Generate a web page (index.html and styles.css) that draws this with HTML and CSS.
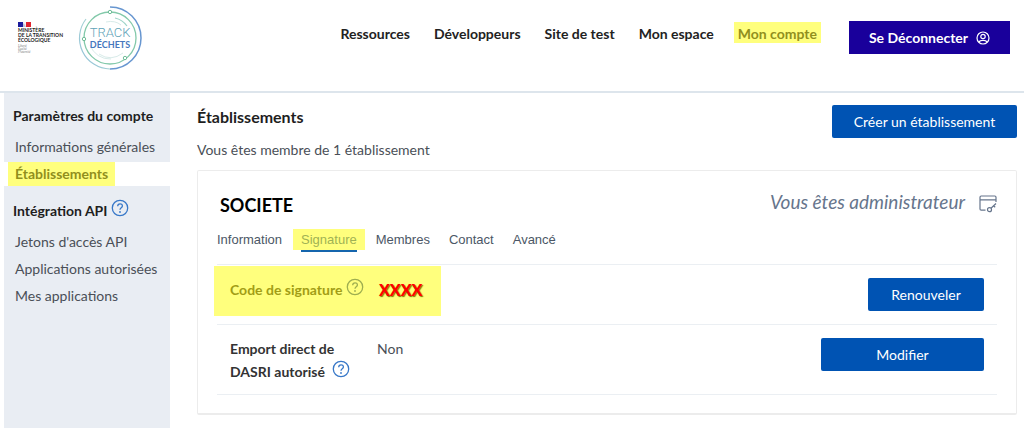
FILE: index.html
```html
<!DOCTYPE html>
<html lang="fr">
<head>
  <meta charset="UTF-8">
  <meta name="viewport" content="width=device-width, initial-scale=1">
  <title>Trackdéchets - Établissements</title>
  <link rel="stylesheet" href="styles.css">
</head>
<body>
  <header class="header">
    <div class="brand">
      <div class="ministry">
        <svg class="flag" viewBox="0 0 13 5" aria-hidden="true">
          <path d="M0 0h5v5H0z" fill="#1b1b9c"/>
          <path d="M5 0h3v5H5z" fill="#f4f4f8"/>
          <path d="M8 0h5v5H8z" fill="#e1242f"/>
          <path d="M5 1.5q1.5 0 1.8 1.2L8 5H5z" fill="#c3c6d6"/>
        </svg>
        <strong>MINISTÈRE<br>DE LA TRANSITION<br>ÉCOLOGIQUE</strong>
        <em>Liberté<br>Égalité<br>Fraternité</em>
      </div>
      <svg class="logo" viewBox="0 0 66 66" role="img" aria-label="Trackdéchets">
        <defs>
          <linearGradient id="ring" x1="0" y1="1" x2="1" y2="0">
            <stop offset="0" stop-color="#8fbfd8"/>
            <stop offset="1" stop-color="#b5dfd2"/>
          </linearGradient>
        </defs>
        <g fill="none">
          <path d="M33 2A31 31 0 1 1 33 64" stroke="#6796d0" stroke-width="1.5"/>
          <path d="M33 64A31 31 0 0 1 9 14" stroke="url(#ring)" stroke-width="1.2"/>
          <circle cx="33" cy="33" r="26" stroke="#83c9aa" stroke-width="1.3"/>
          <path d="M38 13A20 20 0 0 1 50 21" stroke="#9ed4c8" stroke-width="1.2"/>
          <path d="M29 17q9-2 15 3M13 40A21 21 0 0 0 34 54M22 49q12 8 24-1" stroke="#d8ebe9"/>
        </g>
        <text class="logo-track" x="33" y="32" text-anchor="middle">TRACK</text>
        <text class="logo-dechets" x="33" y="43" text-anchor="middle">DÉCHETS</text>
        <g fill="#fff" stroke="#6fbd98">
          <circle cx="33" cy="7" r="1.7"/>
          <circle cx="7" cy="34" r="1.7"/>
          <circle cx="48" cy="53" r="1.7"/>
        </g>
      </svg>
    </div>
    <nav class="main-nav">
      <a href="#">Ressources</a>
      <a href="#">Développeurs</a>
      <a href="#">Site de test</a>
      <a href="#">Mon espace</a>
      <a href="#" class="marked">Mon compte</a>
    </nav>
    <button class="logout" type="button">
      Se Déconnecter
      <svg viewBox="0 0 14 14" fill="none" stroke="currentColor" stroke-width="1.2" aria-hidden="true">
        <circle cx="7" cy="7" r="6"/>
        <circle cx="7" cy="5.5" r="2.2"/>
        <path d="M3 11.2C4 8.8 10 8.8 11 11.2"/>
      </svg>
    </button>
  </header>

  <div class="layout">
    <aside class="sidebar">
      <h2>Paramètres du compte</h2>
      <ul>
        <li><a href="#">Informations générales</a></li>
        <li class="active"><a href="#">Établissements</a></li>
      </ul>
      <h2>Intégration API
        <svg class="help" viewBox="0 0 18 18" aria-hidden="true"><use href="#help-icon"/></svg>
      </h2>
      <ul>
        <li><a href="#">Jetons d'accès API</a></li>
        <li><a href="#">Applications autorisées</a></li>
        <li><a href="#">Mes applications</a></li>
      </ul>
    </aside>

    <main class="content">
      <div class="content-head">
        <div>
          <h1>Établissements</h1>
          <p>Vous êtes membre de 1 établissement</p>
        </div>
        <button class="btn btn-create" type="button">Créer un établissement</button>
      </div>

      <section class="card">
        <div class="card-head">
          <h2>SOCIETE</h2>
          <p class="role">
            Vous êtes administrateur
            <svg viewBox="0 0 18 18" fill="none" stroke="currentColor" stroke-width="1.2" aria-hidden="true">
              <path d="M6.5 15.2H2.2Q1 15.2 1 14V2.2Q1 1 2.2 1H15.8Q17 1 17 2.2V7M1 4.8H17"/>
              <circle cx="10.5" cy="14.7" r="2"/>
              <path d="M12 13.2L17 8.5M14.5 10.7L16.2 12.2"/>
            </svg>
          </p>
        </div>
        <nav class="tabs">
          <a href="#">Information</a>
          <a href="#" class="current">Signature</a>
          <a href="#">Membres</a>
          <a href="#">Contact</a>
          <a href="#">Avancé</a>
        </nav>
        <div class="row row-marked">
          <div class="label">Code de signature <svg class="help" viewBox="0 0 18 18" aria-hidden="true"><use href="#help-icon"/></svg></div>
          <div class="secret">XXXX</div>
          <button class="btn btn-renew" type="button">Renouveler</button>
        </div>
        <div class="row">
          <div class="label">Emport direct de DASRI autorisé&nbsp; <svg class="help" viewBox="0 0 18 18" aria-hidden="true"><use href="#help-icon"/></svg></div>
          <div class="value">Non</div>
          <button class="btn btn-edit" type="button">Modifier</button>
        </div>
      </section>
    </main>
  </div>

  <svg class="sprite" aria-hidden="true">
    <symbol id="help-icon" viewBox="0 0 18 18">
      <g fill="none" stroke="currentColor" stroke-width="1.3">
        <circle cx="9" cy="9" r="7.7"/>
        <path d="M6.7 7.2C6.7 4 11.4 4.1 11.4 7C11.4 8.8 9 8.8 9 10.8"/>
      </g>
      <circle cx="9" cy="13" r=".9" fill="currentColor"/>
    </symbol>
  </svg>
</body>
</html>
```
FILE: styles.css
```css
* { box-sizing: border-box; }

body {
  margin: 0;
  background: #fff;
  color: #4a4f57;
  font-family: Lato, sans-serif;
  font-size: 14px;
  line-height: 24px;
}

h1, h2, p, ul { margin: 0; padding: 0; }
ul { list-style: none; }
a { color: inherit; text-decoration: none; }
button { font-family: inherit; cursor: pointer; }

/* Header */
.header {
  display: flex;
  align-items: flex-start;
  padding: 5px 14px 20px 18px;
  border-bottom: 2px solid #dde5ec;
}

.brand { display: flex; align-items: flex-start; gap: 13px; }

.ministry {
  width: 46px;
  padding-top: 17px;
  color: #222;
  font-size: 5px;
  line-height: 5px;
  white-space: nowrap;
}
.ministry strong, .ministry em { display: block; }
.ministry em {
  margin-top: 2px;
  color: #777;
  font-family: "Liberation Serif", serif;
  font-size: 3px;
  line-height: 3px;
}
.flag { display: block; width: 13px; height: 5px; margin-bottom: 1px; }

.logo { width: 66px; height: 66px; }
.logo-track {
  fill: #5fa3b8;
  font-family: Roboto, sans-serif;
  font-size: 13px;
  font-weight: 300;
}
.logo-dechets {
  fill: #4677bd;
  font-size: 9px;
  font-weight: 700;
}

.main-nav {
  display: flex;
  gap: 24px;
  margin-left: auto;
  padding-top: 17px;
  color: #222;
  font-size: 14px;
  font-weight: 700;
}
.main-nav a { line-height: 23px; }
.main-nav .marked {
  height: 21px;
  margin: 0 -4px;
  padding: 0 4px;
  background: #ffff7d;
  color: #918f1d;
}

.logout {
  display: flex;
  align-items: center;
  justify-content: center;
  gap: 8px;
  width: 161px;
  height: 33px;
  margin: 16px 0 0 32px;
  border: 0;
  background: #19009b;
  color: #fff;
  font-size: 14px;
  font-weight: 700;
}
.logout svg { width: 14px; height: 14px; }

/* Page columns */
.layout {
  display: flex;
  gap: 27px;
  padding: 0 7px 5px 4px;
}

.sidebar {
  flex: none;
  width: 166px;
  padding-top: 11px;
  background: #e9edf3;
}
.sidebar h2 {
  display: flex;
  gap: 4px;
  margin-left: 9px;
  color: #1e1e1e;
  font-size: 14px;
  font-weight: 700;
}
.sidebar ul {
  display: grid;
  gap: 3px;
  margin: 7px 0 13px;
}
.sidebar li { padding-left: 11px; }
.sidebar .active { padding-left: 4px; background: #fff; }
.active a {
  display: inline-block;
  padding: 0 7px;
  background: #ffff7d;
  color: #918f1d;
  font-weight: 700;
}

.help { width: 18px; height: 18px; color: #3878c8; }

.content { flex: 1; padding-bottom: 13px; }
.content-head {
  display: flex;
  align-items: flex-start;
  justify-content: space-between;
  padding: 12px 0 8px;
}
.content-head h1 {
  margin-bottom: 9px;
  color: #1e1e1e;
  font-size: 16px;
  font-weight: 700;
  line-height: 24px;
}

.btn {
  height: 33px;
  border: 0;
  border-radius: 2px;
  background: #0053b3;
  color: #fff;
  font-size: 14px;
}
.btn-create { width: 185px; }
.btn-renew { width: 116px; }
.btn-edit { width: 163px; }

/* Company card */
.card {
  padding: 20px 19px 18px;
  border: 1px solid #ececec;
  border-bottom-width: 2px;
  border-radius: 2px;
}
.card-head {
  display: flex;
  justify-content: space-between;
}
.card-head h2 {
  padding: 2px 0 0 3px;
  color: #000;
  font-size: 18px;
  font-weight: 700;
}
.role {
  display: flex;
  gap: 14px;
  color: #66758c;
  font-size: 19px;
  font-style: italic;
  line-height: 22px;
}
.role svg { width: 18px; height: 18px; margin-top: 4px; }

.tabs {
  display: flex;
  gap: 19px;
  padding: 12px 0 14px;
  color: #4b5766;
  font-family: "Liberation Sans", Arial, sans-serif;
  font-size: 13px;
  line-height: 21px;
}
.tabs .current {
  position: relative;
  margin: 0 -8px;
  padding: 0 8px;
  background: #ffff7d;
  color: #9fb254;
}
.current::after {
  content: "";
  position: absolute;
  right: 8px;
  bottom: -2px;
  left: 8px;
  height: 2px;
  background: #1565ad;
}

.row {
  display: grid;
  grid-template-columns: 134px 1fr auto;
  gap: 13px;
  padding: 13px 13px 0;
  border-top: 1px solid #ebeff3;
}
.row:last-child { padding-bottom: 11px; border-bottom: 1px solid #ebeff3; }

.label {
  color: #333;
  font-weight: 700;
  line-height: 22px;
}
.label .help { vertical-align: -1px; }
.value { line-height: 22px; }

.row-marked {
  position: relative;
  padding-bottom: 13px;
}
.row-marked::before {
  content: "";
  position: absolute;
  top: 1px;
  bottom: 8px;
  left: -3px;
  z-index: -1;
  width: 227px;
  background: #ffff7d;
}
.row-marked .label { color: #a29d16; white-space: nowrap; }
.row-marked .help { color: #9eae50; }

.secret {
  padding-left: 2px;
  color: #fe0000;
  font-size: 16px;
  font-weight: 900;
  text-shadow: 1px 1px 1px #7a7a00;
}

.sprite { display: none; }
```
